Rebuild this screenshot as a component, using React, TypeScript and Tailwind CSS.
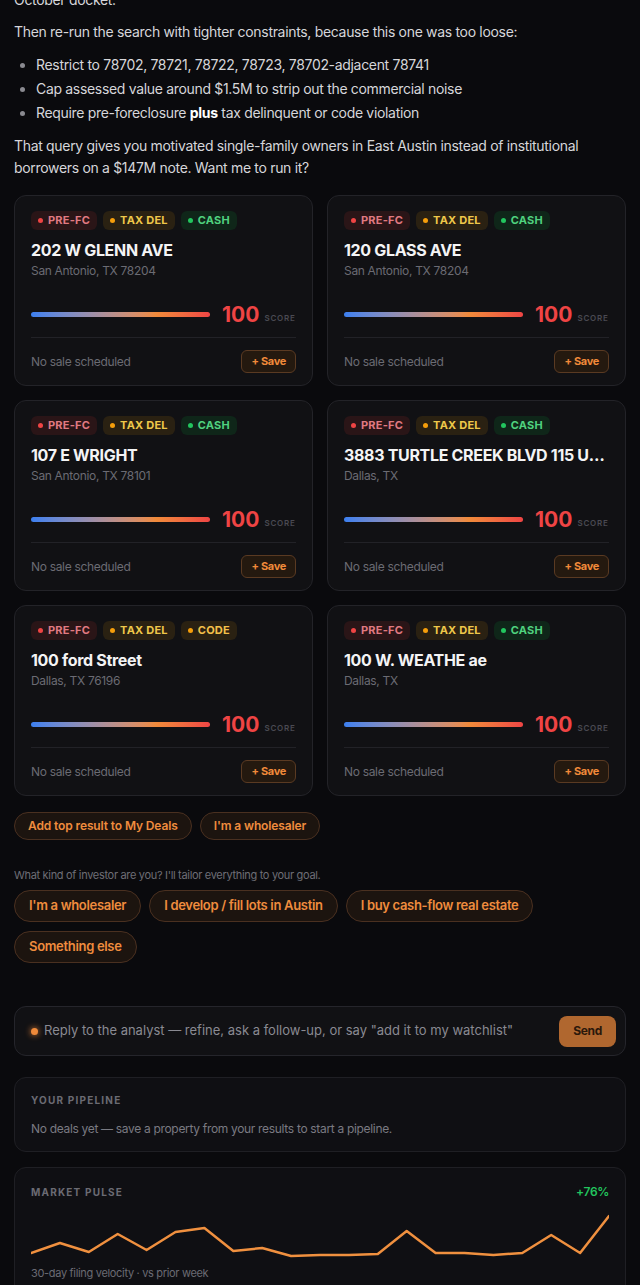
import React from 'react';

type Tag = { label: string; kind: 'red' | 'yellow' | 'green' | 'code' };

const tagStyles: Record<Tag['kind'], { box: string; dot: string }> = {
  red: { box: 'bg-[#2a1517] text-[#e07a82]', dot: 'bg-[#ef4444]' },
  yellow: { box: 'bg-[#2a2112] text-[#eec84a]', dot: 'bg-[#f59e0b]' },
  green: { box: 'bg-[#0f2619] text-[#4fd27f]', dot: 'bg-[#22c55e]' },
  code: { box: 'bg-[#2a2112] text-[#f4c04a]', dot: 'bg-[#f59e0b]' },
};

const properties = [
  { address: '202 W GLENN AVE', city: 'San Antonio, TX 78204', tags: ['PRE-FC', 'TAX DEL', 'CASH'] },
  { address: '120 GLASS AVE', city: 'San Antonio, TX 78204', tags: ['PRE-FC', 'TAX DEL', 'CASH'] },
  { address: '107 E WRIGHT', city: 'San Antonio, TX 78101', tags: ['PRE-FC', 'TAX DEL', 'CASH'] },
  { address: '3883 TURTLE CREEK BLVD 115 UNIT 115', city: 'Dallas, TX', tags: ['PRE-FC', 'TAX DEL', 'CASH'] },
  { address: '100 ford Street', city: 'Dallas, TX 76196', tags: ['PRE-FC', 'TAX DEL', 'CODE'] },
  { address: '100 W. WEATHE ae', city: 'Dallas, TX', tags: ['PRE-FC', 'TAX DEL', 'CASH'] },
];

const kindOf = (label: string): Tag['kind'] =>
  label === 'PRE-FC' ? 'red' : label === 'TAX DEL' ? 'yellow' : label === 'CODE' ? 'code' : 'green';

// filing velocity, last 21 samples
const pulse = [39, 29, 38, 20, 36, 18, 14, 37, 34, 42, 41, 41, 40, 17, 39, 39, 41, 39, 21, 39, 2];

const Badge: React.FC<{ label: string }> = ({ label }) => {
  const s = tagStyles[kindOf(label)];
  return (
    <span className={`inline-flex items-center gap-[5px] h-[19px] px-[7px] rounded-md text-[11px] font-bold tracking-[0.02em] ${s.box}`}>
      <span className={`w-[5px] h-[5px] rounded-full ${s.dot}`} />
      {label}
    </span>
  );
};

const PropertyCard: React.FC<{ p: (typeof properties)[number] }> = ({ p }) => (
  <div className="bg-[#111114] border border-[#232328] rounded-xl px-4 pt-[15px] pb-[12px] flex flex-col min-w-0">
    <div className="flex gap-[6px]">
      {p.tags.map(t => (
        <Badge key={t} label={t} />
      ))}
    </div>
    <div className="mt-[10px] text-[16px] leading-5 font-bold text-[#f4f4f5] truncate">{p.address}</div>
    <div className="mt-[3px] text-[12px] leading-4 text-[#6b6b73]">{p.city}</div>
    <div className="mt-[21px] flex items-center h-[28px] overflow-hidden">
      <div className="w-[179px] shrink-0 h-[5px] rounded-full bg-gradient-to-r from-[#3b7ff0] via-[#f08a3a] via-70% to-[#ee4444]" />
      <span className="ml-3 text-[21px] font-bold text-[#ef4444] leading-none tracking-normal">100</span>
      <span className="ml-[5px] mt-[7px] text-[8px] font-semibold tracking-[0.1em] text-[#4a4a52]">SCORE</span>
    </div>
    <div className="mt-[9px] border-t border-[#222227] pt-[12px] flex items-center justify-between">
      <span className="text-[12px] text-[#6b6b73]">No sale scheduled</span>
      <button className="h-[23px] px-[9px] rounded-md border border-[#5a3a22] bg-[#24190f] text-[11px] font-bold text-[#f08a3a]">
        + Save
      </button>
    </div>
  </div>
);

const Pill: React.FC<{ children: React.ReactNode; small?: boolean }> = ({ children, small }) => (
  <button
    className={`rounded-full border border-[#4a3020] bg-[#1c140f] font-semibold text-[#ef8c3e] ${
      small ? 'h-[28px] px-[13px] text-[12px] tracking-[-0.01em]' : 'h-[32px] px-[14px] text-[13px]'
    }`}
  >
    {children}
  </button>
);

export default function App() {
  const w = 580;
  const step = w / (pulse.length - 1);
  const pts = pulse.map((v, i) => `${(i * step).toFixed(1)},${v + 3}`).join(' ');

  return (
    <div
      className="min-h-[1285px] bg-[#0a0a0d] text-[#d6d6da] px-[14px] overflow-hidden tracking-[-0.02em]"
      style={{ fontFamily: 'Inter, "Liberation Sans", sans-serif' }}
    >
      <div className="-mt-[11px] text-[14px] leading-[22px] flex flex-col gap-[10px]">
        <p>October docket.</p>
        <p>Then re-run the search with tighter constraints, because this one was too loose:</p>
        <ul className="list-disc pl-[22px] marker:text-[#8a8a90]">
          <li className="leading-6">Restrict to 78702, 78721, 78722, 78723, 78702-adjacent 78741</li>
          <li className="leading-6">Cap assessed value around $1.5M to strip out the commercial noise</li>
          <li className="leading-6">
            Require pre-foreclosure <b className="font-bold text-white">plus</b> tax delinquent or code violation
          </li>
        </ul>
        <p>
          That query gives you motivated single-family owners in East Austin instead of institutional borrowers on a
          $147M note. Want me to run it?
        </p>
      </div>

      <div className="mt-[16px] grid grid-cols-2 gap-x-[14px] gap-y-[14px]">
        {properties.map(p => (
          <PropertyCard key={p.address} p={p} />
        ))}
      </div>

      <div className="mt-4 flex gap-2">
        <Pill small>Add top result to My Deals</Pill>
        <Pill small>I'm a wholesaler</Pill>
      </div>

      <p className="mt-[27px] text-[11px] leading-4 text-[#6e6e76]">
        What kind of investor are you? I'll tailor everything to your goal.
      </p>
      <div className="mt-[7px] flex flex-wrap gap-x-2 gap-y-[9px] w-[545px]">
        <Pill>I'm a wholesaler</Pill>
        <Pill>I develop / fill lots in Austin</Pill>
        <Pill>I buy cash-flow real estate</Pill>
        <Pill>Something else</Pill>
      </div>

      <div className="mt-[43px] h-[50px] rounded-xl border border-[#25252b] bg-[#111114] flex items-center pl-[16px] pr-[9px]">
        <span className="w-[7px] h-[7px] rounded-full bg-[#f08a3a] shadow-[0_0_6px_#f08a3a]" />
        <span className="ml-[6px] flex-1 text-[13px] tracking-normal text-[#8a8a92]">
          Reply to the analyst — refine, ask a follow-up, or say "add it to my watchlist"
        </span>
        <button className="h-[31px] px-[14px] rounded-lg bg-[#b0672f] text-[12px] font-bold text-[#2a180b]">Send</button>
      </div>

      <div className="mt-[21px] rounded-xl border border-[#1f1f24] bg-[#0f0f13] px-4 pt-[15px] pb-[13px]">
        <div className="text-[10px] font-bold tracking-[0.12em] text-[#6b6b73]">YOUR PIPELINE</div>
        <div className="mt-[12px] text-[12px] text-[#7a7a82]">
          No deals yet — save a property from your results to start a pipeline.
        </div>
      </div>

      <div className="mt-[15px] rounded-xl border border-[#1f1f24] bg-[#0f0f13] px-4 pt-[15px] pb-4">
        <div className="flex items-center justify-between">
          <span className="text-[10px] font-bold tracking-[0.12em] text-[#6b6b73]">MARKET PULSE</span>
          <span className="text-[12px] font-semibold text-[#22c55e]">+76%</span>
        </div>
        <svg className="mt-[10px] block" width="100%" height="48" viewBox={`0 0 ${w} 48`} preserveAspectRatio="none">
          <polyline points={pts} fill="none" stroke="#f0903f" strokeWidth="2.5" strokeLinejoin="round" strokeLinecap="round" />
        </svg>
        <div className="mt-[6px] text-[11px] text-[#6b6b73]">30-day filing velocity · vs prior week</div>
      </div>
    </div>
  );
}
